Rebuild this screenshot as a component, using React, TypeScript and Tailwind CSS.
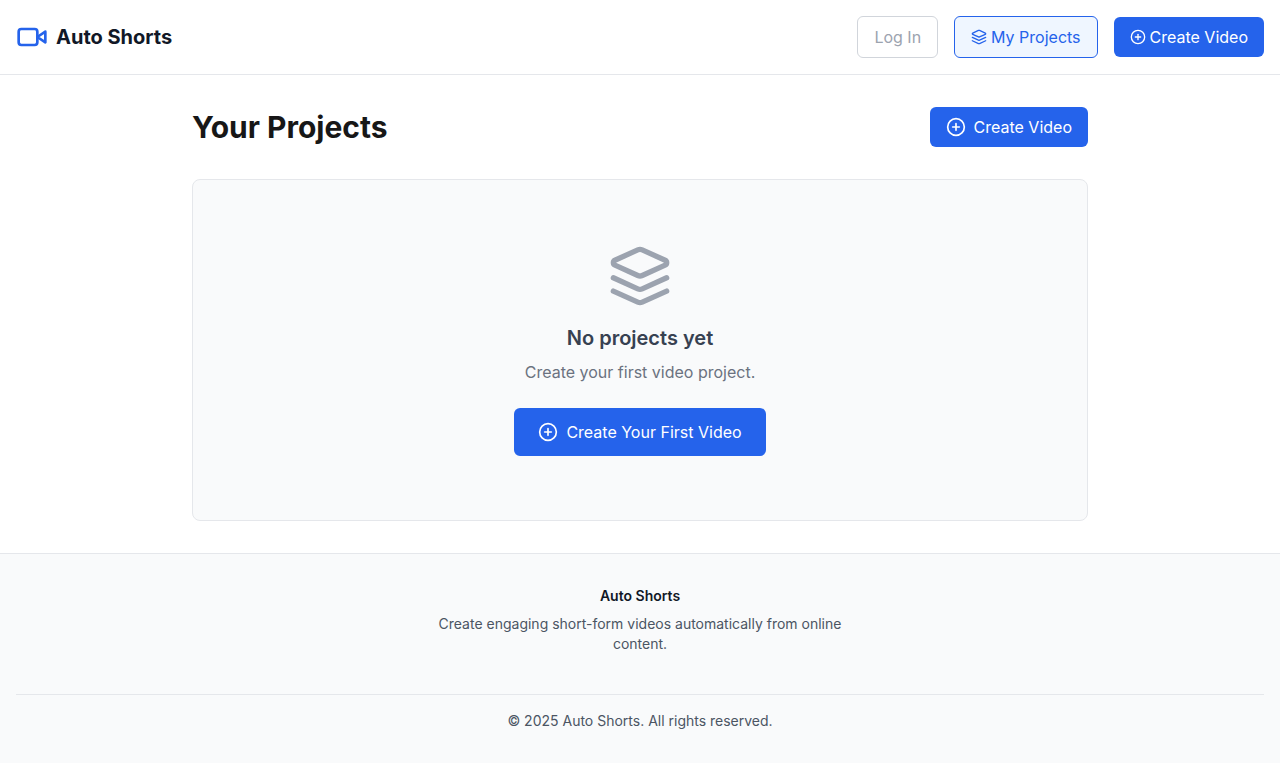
import { CirclePlus } from "lucide-react";

function VideoLogo() {
  return (
    <svg
      className="h-8 w-8 text-[#2563eb]"
      viewBox="0 0 24 24"
      fill="none"
      stroke="currentColor"
      strokeWidth="2"
      strokeLinecap="round"
      strokeLinejoin="round"
      aria-hidden="true"
    >
      <path d="m22 8-6 4 6 4V8Z" />
      <rect width="14" height="12" x="2" y="6" rx="2" ry="2" />
    </svg>
  );
}

function LayersIcon({ className }: { className: string }) {
  return (
    <svg
      className={className}
      viewBox="0 0 24 24"
      fill="none"
      stroke="currentColor"
      strokeWidth="2"
      strokeLinecap="round"
      strokeLinejoin="round"
      aria-hidden="true"
    >
      <path d="m12.83 2.18a2 2 0 0 0-1.66 0L2.6 6.08a1 1 0 0 0 0 1.83l8.58 3.91a2 2 0 0 0 1.66 0l8.58-3.9a1 1 0 0 0 0-1.83Z" />
      <path d="m22 17.65-9.17 4.16a2 2 0 0 1-1.66 0L2 17.65" />
      <path d="m22 12.65-9.17 4.16a2 2 0 0 1-1.66 0L2 12.65" />
    </svg>
  );
}

function Header() {
  return (
    <header className="border-b border-[#e5e7eb] bg-white">
      <div className="flex items-center justify-between p-4">
        <a href="#" className="flex items-center gap-2">
          <VideoLogo />
          <span className="text-xl font-bold text-[#111827]">Auto Shorts</span>
        </a>
        <nav className="flex items-center gap-4">
          <button className="rounded-md border border-[#d1d5db] px-4 py-2 text-[#9ca3af]">
            Log In
          </button>
          <a
            href="#"
            className="flex items-center gap-1 rounded-md border border-[#2563eb] bg-[#eff6ff] px-4 py-2 text-[#2563eb]"
          >
            <LayersIcon className="h-4 w-4" />
            My Projects
          </a>
          <a
            href="#"
            className="flex items-center gap-1 rounded-md bg-[#2563eb] px-4 py-2 text-white"
          >
            <CirclePlus className="h-4 w-4" />
            Create Video
          </a>
        </nav>
      </div>
    </header>
  );
}

function Projects() {
  return (
    <main className="mx-auto w-full max-w-4xl py-8">
      <div className="mb-8 flex items-center justify-between">
        <h1 className="text-3xl font-bold text-[#171717]">Your Projects</h1>
        <a
          href="#"
          className="flex items-center gap-2 rounded-md bg-[#2563eb] px-4 py-2 text-white"
        >
          <CirclePlus className="h-5 w-5" />
          Create Video
        </a>
      </div>
      <section className="flex flex-col items-center rounded-lg border border-[#e5e7eb] bg-[#f9fafb] p-16 text-center">
        <LayersIcon className="mb-4 h-16 w-16 text-[#9ca3af]" />
        <h2 className="mb-2 text-xl font-semibold text-[#374151]">
          No projects yet
        </h2>
        <p className="mb-6 text-[#6b7280]">Create your first video project.</p>
        <a
          href="#"
          className="flex items-center gap-2 rounded-md bg-[#2563eb] px-6 py-3 text-white"
        >
          <CirclePlus className="h-5 w-5" />
          Create Your First Video
        </a>
      </section>
    </main>
  );
}

function Footer() {
  return (
    <footer className="flex-1 border-t border-[#e5e7eb] bg-[#f9fafb] px-4 py-8 text-center text-sm text-[#4b5563]">
      <div className="mx-auto max-w-md">
        <h3 className="mb-2 font-semibold text-[#111827]">Auto Shorts</h3>
        <p>
          Create engaging short-form videos automatically from online content.
        </p>
      </div>
      <div className="mt-10 border-t border-[#e5e7eb] pt-4">
        <p>© 2025 Auto Shorts. All rights reserved.</p>
      </div>
    </footer>
  );
}

export default function App() {
  return (
    <div className="flex min-h-screen flex-col bg-white font-['Inter',sans-serif] antialiased">
      <Header />
      <Projects />
      <Footer />
    </div>
  );
}
